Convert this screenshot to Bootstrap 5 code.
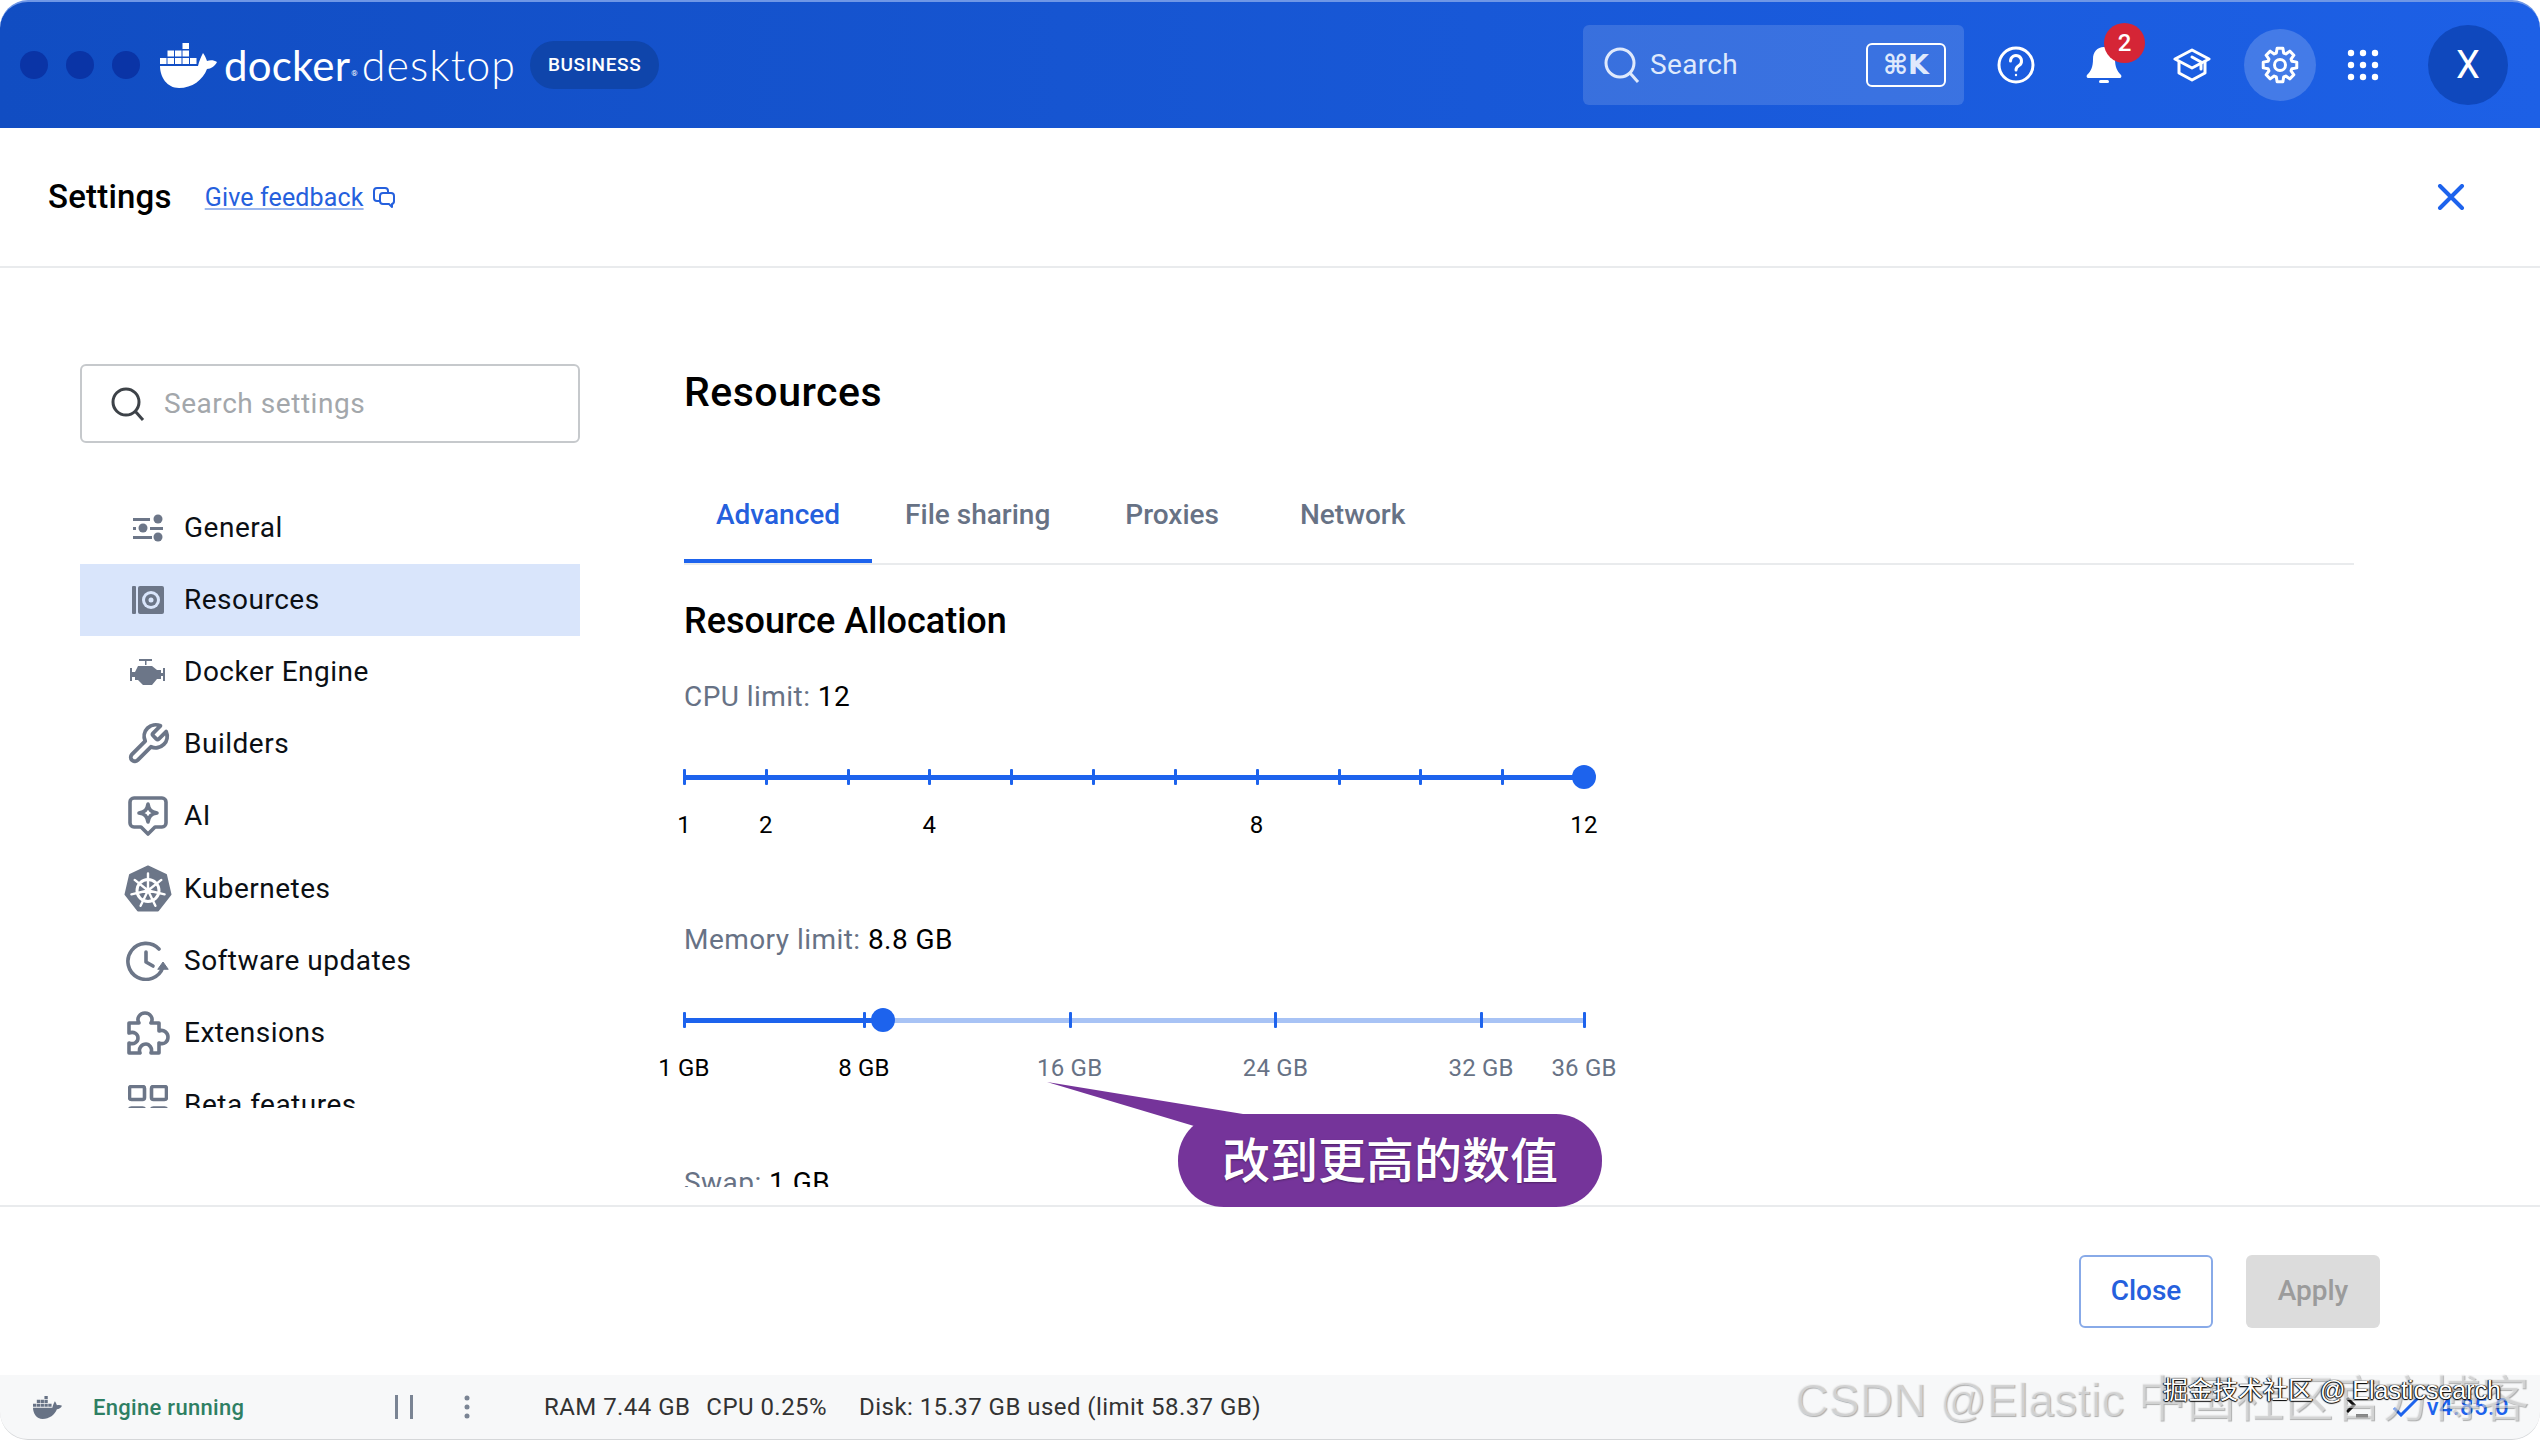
<!DOCTYPE html>
<html lang="en">
<head>
    <meta charset="UTF-8">
    <meta name="viewport" content="width=device-width, initial-scale=1.0">
    <title>Docker Desktop Settings</title>
    <link rel="stylesheet" href="https://cdn.jsdelivr.net/npm/bootstrap@5.3.3/dist/css/bootstrap.min.css">
    <style>
        html, body { height: 100%; }
        body { font-family: Roboto, "Noto Sans CJK SC", sans-serif; background: #fff; overflow: hidden; position: relative; color: #000; letter-spacing: .35px; }
        .app-frame { width: 2540px; height: 1440px; }

        /* top bar */
        .top-bar { height: 128px; background: linear-gradient(90deg, #114dc2 0%, #1d60e6 100%); border-top: 2px solid #6f97e6; border-radius: 28px 28px 0 0; color: #fff; }
        .win-dot { width: 28px; height: 28px; border-radius: 50%; background: #0a34a6; margin-right: 18px; }
        .win-dots { margin-left: 20px; margin-right: 2px; }
        .logo-word { font-family: Lato, sans-serif; font-size: 42px; line-height: 48px; letter-spacing: .2px; margin-left: 7px; }
        .logo-word.thin { font-weight: 300; font-size: 43px; margin-left: 4px; letter-spacing: 1px; }
        .logo-reg { font-size: 8px; margin-top: 18px; margin-left: 1px; }
        .plan-pill { width: 129px; height: 48px; border-radius: 24px; background: #0f45ab; font-size: 19px; font-weight: 500; margin-left: 14px; letter-spacing: .6px; }
        .top-search { width: 381px; height: 80px; background: rgba(255,255,255,.14); border-radius: 6px; padding: 0 18px 0 21px; color: #dfe9fc; font-size: 28px; }
        .top-search span.word { margin-left: 10px; }
        .key-hint { width: 80px; height: 44px; border: 2px solid #fff; border-radius: 6px; font-size: 27px; font-weight: 700; font-family: "DejaVu Sans", Roboto, sans-serif; letter-spacing: 0; }
        .top-icons { margin-right: 32px; }
        .top-slot { width: 72px; height: 72px; position: relative; margin-left: 16px; flex: none; }
        .top-slot.dots-slot { margin-left: 11px; }
        .top-slot.on { background: rgba(255,255,255,.18); border-radius: 50%; }
        .bell-badge { position: absolute; left: 36px; top: -6px; width: 41px; height: 40px; border-radius: 50%; background: #d52536; font-size: 24px; font-weight: 500; letter-spacing: 0; }
        .user-avatar { width: 80px; height: 80px; border-radius: 50%; background: #0f48bd; font-size: 38px; margin-left: 29px; letter-spacing: 0; }

        /* settings header */
        .settings-head { height: 140px; border-bottom: 2px solid #e9ebed; padding: 0 48px; }
        .settings-title { font-size: 33px; font-weight: 500; line-height: 40px; letter-spacing: .2px; }
        .feedback-link { font-size: 25px; color: #2560dd; margin-left: 33px; text-decoration-color: #9db8ee; letter-spacing: .15px; margin-top: 1px; }
        .head-close { margin-left: auto; margin-right: 27px; color: #1d63ed; }

        /* body */
        .settings-main { height: 937px; }
        .side-col { width: 500px; margin-left: 80px; padding-top: 96px; flex: none; }
        .side-search { height: 79px; width: 500px; border: 2px solid #c6c9cc; border-radius: 6px; padding-left: 29px; color: #a3a7ab; font-size: 28px; letter-spacing: .55px; }
        .side-search svg { margin-right: 19px; }
        .side-nav { margin-top: 49px; height: 616px; overflow: hidden; }
        .side-item { height: 72.1px; padding-left: 40px; font-size: 28px; letter-spacing: .5px; color: #0b0f14; }
        .side-item.on { background: #d9e5fb; }
        .side-ico { width: 56px; margin-right: 8px; flex: none; color: #6c7688; }
        .content-col { width: 1730px; margin-left: 44px; height: 919px; overflow: hidden; padding: 100px 0 0 60px; flex: none; }
        .page-title { font-size: 41px; font-weight: 500; line-height: 48px; margin: 0; letter-spacing: .5px; }
        .tab-row { margin-top: 50px; border-bottom: 2px solid #e9ebed; height: 99px; }
        .tab-row .nav-item:nth-child(2) { margin-left: 1px; }
        .tab-row .nav-item:nth-child(3) { margin-left: 11px; }
        .tab-row .nav-item:nth-child(4) { margin-left: 17px; }
        .tab-row .nav-link { height: 97px; padding: 31px 32px 0; font-size: 28px; line-height: 36px; font-weight: 500; color: #677285; letter-spacing: 0; }
        .tab-row .nav-link.active { color: #2560dd; border-bottom: 4px solid #1d63ed; }
        .alloc-title { font-size: 36px; font-weight: 500; line-height: 44px; margin: 34px 0 36px; letter-spacing: 0; }
        .limit-label { font-size: 28px; line-height: 36px; color: #677285; margin-bottom: 50px; letter-spacing: .45px; }
        .limit-label b { font-weight: 400; color: #000; }
        .limit-track { height: 24px; width: 900px; position: relative; }
        .track-bg, .track-fill { position: absolute; left: 0; top: 10px; height: 5px; background: #1d63ed; }
        .track-bg { width: 100%; background: #a8c3f5; }
        .track-tick { position: absolute; top: 4px; width: 3px; height: 16px; margin-left: -1px; background: #1d63ed; border-radius: 1px; }
        .track-thumb { position: absolute; top: 0; width: 24px; height: 24px; margin-left: -12px; border-radius: 50%; background: #1d63ed; }
        .limit-marks { position: relative; width: 900px; height: 30px; margin-top: 21px; margin-bottom: 82px; font-size: 24px; line-height: 30px; }
        .limit-mark { position: absolute; top: 0; transform: translateX(-50%); white-space: nowrap; color: #677285; letter-spacing: .2px; }
        .limit-mark.done { color: #000; }

        /* footer */
        .action-bar { height: 170px; border-top: 2px solid #e9ebed; padding-right: 160px; gap: 33px; }
        .action-bar .btn { width: 134px; height: 73px; font-size: 28px; font-weight: 500; border-radius: 6px; letter-spacing: 0; }
        .btn-close-win { border: 2px solid #88aae8; color: #2560dd; background: #fff; }
        .btn-apply-off { border: 0; background: #dcdcdc; color: #9b9b9b; }
        .status-bar { height: 65px; background: #f7f8f9; border-radius: 0 0 28px 28px; border-bottom: 1px solid #d5d7d9; font-size: 24px; color: #333; }
        .status-whale { margin-left: 33px; color: #677285; }
        .engine-state { font-size: 22px; font-weight: 500; color: #2e7f63; margin-left: 31px; width: 302px; letter-spacing: .3px; }
        .status-bars { width: 18px; height: 24px; border-left: 3px solid #7a8494; border-right: 3px solid #7a8494; }
        .status-kebab { margin-left: 51px; margin-right: 74px; }
        .status-stat { margin-right: 16px; white-space: nowrap; letter-spacing: .45px; }
        .status-stat.wide { margin-left: 16px; }
        .status-right { margin-left: auto; margin-right: 31px; color: #1d63ed; font-size: 24px; font-weight: 500; }

        /* things that lie over the screenshot */
        .callout { position: absolute; left: 1178px; top: 1114px; width: 424px; height: 93px; padding-bottom: 8px; background: #75349a; border-radius: 46px; color: #fff; font-size: 48px; font-weight: 500; letter-spacing: 0; font-family: "Noto Sans CJK SC", sans-serif; text-shadow: 0 1px 2px rgba(0,0,0,.35); }
        .callout svg { position: absolute; left: -131px; top: -32px; }
        .mark-csdn { position: absolute; left: 1795px; top: 1367px; font-family: "Liberation Sans", "Noto Sans CJK SC", sans-serif; font-size: 46px; line-height: 64px; color: rgba(240,240,240,.55); text-shadow: 1px 1px 1px rgba(0,0,0,.3); letter-spacing: .3px; white-space: nowrap; }
        .mark-csdn span { font-size: 49px; letter-spacing: 0; }
        .mark-juejin { position: absolute; left: 2163px; top: 1372px; font-family: "Liberation Sans", "Noto Sans CJK SC", sans-serif; font-size: 25px; line-height: 36px; color: #fff; text-shadow: 1px 0 1px #000, -1px 0 1px #000, 0 1px 1px #000; letter-spacing: 0; white-space: nowrap; }
    </style>
</head>
<body>
    <svg width="0" height="0" class="position-absolute">
        <symbol id="whale" viewBox="0 0 57 45">
            <path fill="currentColor" d="M22.5 0h6.5v6h-6.5zM7.5 7.5H14v6H7.500zM15 7.500h6.500v6H15zM22.500 7.500h6.500v6h-6.500zM0 15h6.500v6H0zM7.500 15H14v6H7.500zM15 15h6.500v6H15zM22.500 15h6.500v6h-6.500zM30 15h6.500v6H30z"/>
            <path fill="currentColor" d="M0 23H38C39 18 41 14 43 10C45 13 46 15 47 18C50 17 54 17 57 19C55 23 51 26 47 26C43 37 32 45 19 45C7 45 0 34 0 23Z"/>
        </symbol>
    </svg>

    <div class="app-frame d-flex flex-column">
        <!-- top bar -->
        <header class="top-bar d-flex align-items-center flex-none">
            <div class="win-dots d-flex"><div class="win-dot"></div><div class="win-dot"></div><div class="win-dot"></div></div>
            <svg width="57" height="45" class="text-white"><use href="#whale"/></svg>
            <span class="logo-word">docker</span><span class="logo-reg">®</span><span class="logo-word thin">desktop</span>
            <div class="plan-pill d-flex align-items-center justify-content-center">BUSINESS</div>

            <div class="ms-auto d-flex align-items-center top-icons">
                <div class="top-search d-flex align-items-center">
                    <svg width="36" height="36" viewBox="0 0 36 36" fill="none" stroke="currentColor" stroke-width="3"><circle cx="16" cy="16" r="14"/><path d="M26 26l8 9"/></svg>
                    <span class="word">Search</span>
                    <span class="key-hint ms-auto d-flex align-items-center justify-content-center">⌘K</span>
                </div>
                <div class="top-slot d-flex align-items-center justify-content-center ms-3">
                    <svg width="38" height="38" viewBox="0 0 38 38" fill="none" stroke="#fff" stroke-width="3"><circle cx="19" cy="19" r="17"/><path d="M13.500 15a5.500 5.500 0 1 1 8.500 4.600c-2 1.300-3 2-3 4.400" stroke-linecap="round"/><circle cx="19" cy="29" r="1.200" fill="#fff" stroke="none"/></svg>
                </div>
                <div class="top-slot d-flex align-items-center justify-content-center">
                    <svg width="36" height="36" viewBox="0 0 36 36" fill="#fff"><path d="M18 0c-7 0-11 5-11 12 0 8-2 12-6 16-1 1 0 3 1 3h32c1 0 2-2 1-3-4-4-6-8-6-16 0-7-4-12-11-12z"/><rect x="13" y="33" width="10" height="3" rx="1.500"/></svg>
                    <span class="bell-badge d-flex align-items-center justify-content-center">2</span>
                </div>
                <div class="top-slot d-flex align-items-center justify-content-center">
                    <svg width="38" height="34" viewBox="0 0 38 34" fill="none" stroke="#fff" stroke-width="3" stroke-linejoin="round" stroke-linecap="round"><path d="M19 2L36 11 19 20 2 11z"/><path d="M6 14V25L19 32 32 25V14"/><path d="M19 9L28 14V21"/></svg>
                </div>
                <div class="top-slot on d-flex align-items-center justify-content-center">
                    <svg width="38" height="38" viewBox="-19 -19 38 38" fill="none" stroke="#fff" stroke-width="3" stroke-linejoin="round"><polygon class="gear-shape"/><circle r="5.500"/></svg>
                </div>
                <div class="top-slot dots-slot d-flex align-items-center justify-content-center">
                    <svg width="32" height="32" viewBox="0 0 32 32" fill="#fff"><circle cx="4" cy="4" r="3.200"/><circle cx="16" cy="4" r="3.200"/><circle cx="28" cy="4" r="3.200"/><circle cx="4" cy="16" r="3.200"/><circle cx="16" cy="16" r="3.200"/><circle cx="28" cy="16" r="3.200"/><circle cx="4" cy="28" r="3.200"/><circle cx="16" cy="28" r="3.200"/><circle cx="28" cy="28" r="3.200"/></svg>
                </div>
                <div class="user-avatar d-flex align-items-center justify-content-center">X</div>
            </div>
        </header>

        <!-- settings title row -->
        <div class="settings-head d-flex align-items-center">
            <span class="settings-title">Settings</span>
            <a href="#" class="feedback-link">Give feedback</a>
            <svg class="ms-2" width="24" height="22" viewBox="0 0 24 22" fill="none" stroke="#2560dd" stroke-width="2" stroke-linejoin="round"><path d="M8 15H5a3 3 0 0 1-3-3V5a3 3 0 0 1 3-3h8a3 3 0 0 1 3 3v2"/><path d="M11 7h8a3 3 0 0 1 3 3v5a3 3 0 0 1-2 3v3l-3-3h-6a3 3 0 0 1-3-3v-5a3 3 0 0 1 3-3z"/></svg>
            <svg class="head-close" width="28" height="26" viewBox="0 0 28 26" fill="none" stroke="currentColor" stroke-width="4" stroke-linecap="round"><path d="M3 2l22 22M25 2L3 24"/></svg>
        </div>

        <!-- sidebar + content -->
        <main class="settings-main d-flex">
            <aside class="side-col">
                <div class="side-search d-flex align-items-center">
                    <svg width="34" height="34" viewBox="0 0 34 34" fill="none" stroke="#3d4248" stroke-width="3"><circle cx="15" cy="15" r="13"/><path d="M24 24l8 9"/></svg>
                    Search settings
                </div>
                <nav class="side-nav">
                    <div class="side-item d-flex align-items-center">
                        <span class="side-ico d-flex justify-content-center"><svg width="32" height="28" viewBox="0 0 32 28" fill="currentColor"><rect x="1" y="4" width="17" height="3"/><circle cx="26" cy="5" r="4.500"/><rect x="1" y="13" width="3" height="3"/><circle cx="11" cy="14" r="4.500"/><rect x="18" y="13" width="13" height="3"/><rect x="1" y="22" width="19" height="3"/><circle cx="26" cy="23" r="4.500"/></svg></span>General
                    </div>
                    <div class="side-item on d-flex align-items-center">
                        <span class="side-ico d-flex justify-content-center"><svg width="32" height="28" viewBox="0 0 32 28" fill="currentColor"><rect width="4" height="28" rx="1"/><rect x="6" width="26" height="28" rx="2"/><circle cx="19" cy="14" r="9" fill="#d9e5fb"/><circle cx="19" cy="14" r="6" fill="currentColor"/><circle cx="19" cy="14" r="2.500" fill="#d9e5fb"/></svg></span>Resources
                    </div>
                    <div class="side-item d-flex align-items-center">
                        <span class="side-ico d-flex justify-content-center"><svg width="36" height="27" viewBox="0 0 36 27" fill="currentColor"><path d="M9 0h13v2h-5.500v4H15V2H9z"/><path d="M8 7H22L27 11H31V20H27L22 26H13L8 21H5V18H2V22H0V9H2V13H5z"/><path d="M33 9h2v13h-2z"/><path d="M30 14h3v3h-3z"/></svg></span>Docker Engine
                    </div>
                    <div class="side-item d-flex align-items-center">
                        <span class="side-ico d-flex justify-content-center"><svg width="46" height="46" viewBox="0 0 24 24" fill="none" stroke="currentColor" stroke-width="2" stroke-linejoin="round"><path d="M14.700 6.300a1 1 0 0 0 0 1.400l1.600 1.600a1 1 0 0 0 1.400 0l3.770-3.770a6 6 0 0 1-7.940 7.940l-6.910 6.910a2.120 2.120 0 0 1-3-3l6.910-6.910a6 6 0 0 1 7.940-7.940l-3.760 3.760z"/></svg></span>Builders
                    </div>
                    <div class="side-item d-flex align-items-center">
                        <span class="side-ico d-flex justify-content-center"><svg width="40" height="41" viewBox="0 0 40 41" fill="none" stroke="currentColor" stroke-width="3.600" stroke-linejoin="round"><path d="M6 2H34a4 4 0 0 1 4 4V27a4 4 0 0 1-4 4H27L20 38 13 31H6a4 4 0 0 1-4-4V6a4 4 0 0 1 4-4Z"/><path d="M20 8C21 14 23 16 29 17 23 18 21 20 20 26 19 20 17 18 11 17 17 16 19 14 20 8Z"/></svg></span>AI
                    </div>
                    <div class="side-item d-flex align-items-center">
                        <span class="side-ico d-flex justify-content-center"><svg width="48" height="48" viewBox="0 0 48 48"><polygon points="24,1.500 42,10 46.500,29.500 34,45.500 14,45.500 1.500,29.500 6,10" fill="currentColor" stroke="currentColor" stroke-width="2" stroke-linejoin="round"/><g stroke="#fff" fill="none" stroke-width="2.400" stroke-linecap="round"><circle cx="24" cy="25.500" r="11" stroke-width="3"/><path d="M24 25.500L24 8.500M24 25.500L37.300 14.900M24 25.500L40.600 29.300M24 25.500L31.400 40.800M24 25.500L16.600 40.800M24 25.500L7.400 29.300M24 25.500L10.700 14.900"/></g><circle cx="24" cy="25.500" r="3" fill="#fff"/></svg></span>Kubernetes
                    </div>
                    <div class="side-item d-flex align-items-center">
                        <span class="side-ico d-flex justify-content-center"><svg width="44" height="40" viewBox="0 0 44 40" fill="none" stroke="currentColor" stroke-width="3.600" stroke-linecap="round" stroke-linejoin="round"><path d="M33 8A18 18 0 1 0 37 26"/><path d="M20 11V21L27 25"/><path d="M32 28l5-7 5 7z" fill="currentColor" stroke-width="1"/></svg></span>Software updates
                    </div>
                    <div class="side-item d-flex align-items-center">
                        <span class="side-ico d-flex justify-content-center"><svg width="44" height="44" viewBox="0 0 44 44" fill="none" stroke="currentColor" stroke-width="3.600" stroke-linejoin="round"><path d="M3 12H13C10 7 14 2 19 2C24 2 28 7 25 12H33V20C38 18 42 22 42 26C42 31 38 34 33 32V42H25C27 37 23 33 20 33C16 33 12 37 14 42H3V32C8 34 12 31 12 27C12 23 8 20 3 22Z"/></svg></span>Extensions
                    </div>
                    <div class="side-item d-flex align-items-center">
                        <span class="side-ico d-flex justify-content-center"><svg width="40" height="40" viewBox="0 0 40 40" fill="none" stroke="currentColor" stroke-width="3.600"><rect x="1.500" y="1.500" width="15" height="13" rx="2"/><rect x="23.500" y="1.500" width="15" height="13" rx="2"/><rect x="1.500" y="23" width="15" height="13" rx="2"/><rect x="23.500" y="23" width="15" height="13" rx="2"/></svg></span>Beta features
                    </div>
                </nav>
            </aside>

            <section class="content-col">
                <h1 class="page-title">Resources</h1>
                <ul class="nav tab-row">
                    <li class="nav-item"><a class="nav-link active" href="#">Advanced</a></li>
                    <li class="nav-item"><a class="nav-link" href="#">File sharing</a></li>
                    <li class="nav-item"><a class="nav-link" href="#">Proxies</a></li>
                    <li class="nav-item"><a class="nav-link" href="#">Network</a></li>
                </ul>
                <h2 class="alloc-title">Resource Allocation</h2>
                <div class="limit-label">CPU limit: <b>12</b></div>
                <div class="limit-track" id="cpu-track"></div>
                <div class="limit-marks" id="cpu-marks"></div>
                <div class="limit-label">Memory limit: <b>8.8 GB</b></div>
                <div class="limit-track" id="mem-track"></div>
                <div class="limit-marks" id="mem-marks"></div>
                <div class="limit-label">Swap: <b>1 GB</b></div>
            </section>
        </main>

        <!-- buttons -->
        <div class="action-bar d-flex align-items-center justify-content-end">
            <button class="btn btn-close-win">Close</button>
            <button class="btn btn-apply-off">Apply</button>
        </div>

        <!-- status bar -->
        <footer class="status-bar d-flex align-items-center">
            <svg class="status-whale" width="29" height="23"><use href="#whale"/></svg>
            <span class="engine-state">Engine running</span>
            <span class="status-bars"></span>
            <svg class="status-kebab" width="6" height="24" viewBox="0 0 6 24" fill="#7a8494"><circle cx="3" cy="3" r="2.500"/><circle cx="3" cy="12" r="2.500"/><circle cx="3" cy="21" r="2.500"/></svg>
            <span class="status-stat">RAM 7.44 GB</span>
            <span class="status-stat">CPU 0.25%</span>
            <span class="status-stat wide">Disk: 15.37 GB used (limit 58.37 GB)</span>
            <div class="status-right d-flex align-items-center">
                <svg class="me-4" width="24" height="22" viewBox="0 0 24 22" fill="none" stroke="#111" stroke-width="3"><path d="M2 2l7 7-7 7M11 20h12"/></svg>
                <svg class="me-2" width="26" height="20" viewBox="0 0 26 20" fill="none" stroke="#1d63ed" stroke-width="3"><path d="M1 11l7 7L25 1"/></svg>
                <span>v4.85.0</span>
            </div>
        </footer>
    </div>

    <!-- annotation + watermarks pasted on the picture -->
    <div class="callout d-flex align-items-center justify-content-center">
        <svg width="210" height="70" viewBox="0 0 210 70"><polygon points="0,0 196,32 196,60 147,60 147,44" fill="#75349a"/></svg>
        <span class="position-relative">改到更高的数值</span>
    </div>
    <div class="mark-csdn">CSDN @Elastic <span>中国社区官方博客</span></div>
    <div class="mark-juejin">掘金技术社区 @ Elasticsearch</div>

    <script>
        // gear icon: 8 teeth
        function gearPoints() {
            const pts = [];
            for (let i = 0; i < 8; i++) {
                const a = i * Math.PI / 4;
                [[-.30, 12.5], [-.17, 17], [.17, 17], [.30, 12.5]].forEach(([d, r]) => {
                    pts.push((Math.sin(a + d) * r).toFixed(2) + ',' + (-Math.cos(a + d) * r).toFixed(2));
                });
            }
            return pts.join(' ');
        }
        document.querySelector('.gear-shape').setAttribute('points', gearPoints());

        const cpuStops = [1, 2, 3, 4, 5, 6, 7, 8, 9, 10, 11, 12];
        const sliders = [
            { id: 'cpu', min: 1, max: 12, value: 12, ticks: cpuStops, marks: [1, 2, 4, 8, 12], unit: '' },
            { id: 'mem', min: 1, max: 36, value: 8.75, ticks: [1, 8, 16, 24, 32, 36], marks: [1, 8, 16, 24, 32, 36], unit: ' GB' }
        ];

        function renderSlider(s) {
            const pos = v => ((v - s.min) / (s.max - s.min) * 100).toFixed(3) + '%';
            document.getElementById(s.id + '-track').innerHTML = `
                <div class="track-bg"></div>
                <div class="track-fill" style="width: ${pos(s.value)}"></div>
                ${s.ticks.map(t => `<div class="track-tick" style="left: ${pos(t)}"></div>`).join('')}
                <div class="track-thumb" style="left: ${pos(s.value)}"></div>`;
            document.getElementById(s.id + '-marks').innerHTML = s.marks.map(m =>
                `<span class="limit-mark ${m <= s.value ? 'done' : ''}" style="left: ${pos(m)}">${m}${s.unit}</span>`).join('');
        }
        sliders.forEach(renderSlider);
    </script>
    <script src="https://cdn.jsdelivr.net/npm/bootstrap@5.3.3/dist/js/bootstrap.bundle.min.js"></script>
</body>
</html>
